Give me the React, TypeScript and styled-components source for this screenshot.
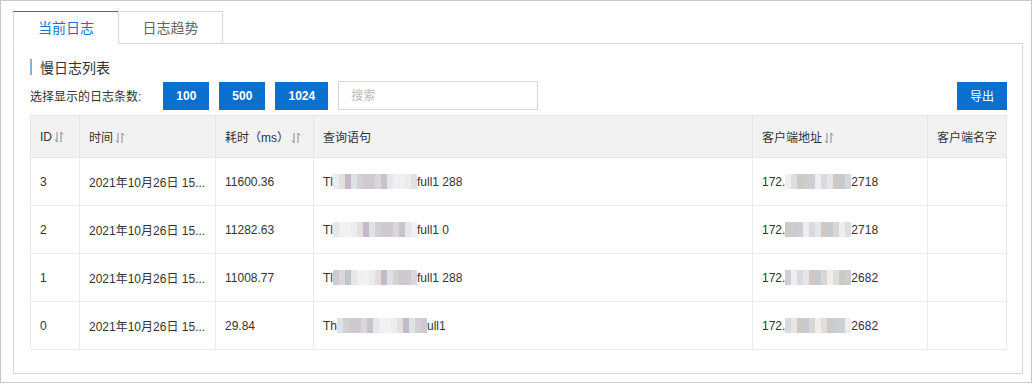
import * as React from "react"
import styled, { createGlobalStyle } from "styled-components"

const GlobalStyle = createGlobalStyle`
  html, body {
    margin: 0;
    padding: 0;
    background: #fff;
  }
  body {
    font-family: "Liberation Sans", "Noto Sans CJK SC", sans-serif;
    font-size: 12px;
    color: #333;
  }
`

const Frame = styled.div`
  box-sizing: border-box;
  width: 1032px;
  height: 383px;
  border: 1px solid #c8c8c8;
  padding: 10px 8px 8px 12px;
  display: flex;
  flex-direction: column;
`
const TabBar = styled.div`
  display: flex;
  height: 33px;
  position: relative;
  z-index: 1;
  margin-bottom: -1px;
`
const Tab = styled.div<{ $active?: boolean }>`
  box-sizing: border-box;
  width: ${p => (p.$active ? "106px" : "105px")};
  height: 33px;
  line-height: 32px;
  text-align: center;
  font-size: 14px;
  background: #fff;
  color: ${p => (p.$active ? "#1a72c6" : "#666")};
  border: 1px solid #d7d7d7;
  border-top-color: ${p => (p.$active ? "#1a72c6" : "#d7d7d7")};
  border-bottom-color: ${p => (p.$active ? "#fff" : "#d7d7d7")};
  margin-left: ${p => (p.$active ? "0" : "-1px")};
`
const Panel = styled.div`
  flex: 1;
  border: 1px solid #d7d7d7;
  padding: 14px 15px 0 16px;
`
const Title = styled.div`
  display: flex;
  align-items: center;
  height: 18px;
  font-size: 14px;
  color: #333;
  &::before {
    content: "";
    width: 2px;
    height: 16px;
    background: #82b2e0;
    margin-right: 8px;
  }
`
const Toolbar = styled.div`
  display: flex;
  align-items: center;
  margin-top: 5px;
  height: 29px;
`
const Label = styled.span`
  margin-right: 22px;
`
const BlueButton = styled.button<{ $w: number }>`
  box-sizing: border-box;
  width: ${p => p.$w}px;
  height: 28px;
  border: none;
  background: #0a70ce;
  color: #fff;
  font-family: inherit;
  font-size: 12px;
  font-weight: bold;
  margin-right: 10px;
  padding: 0;
`
const Search = styled.input`
  box-sizing: border-box;
  width: 200px;
  height: 29px;
  border: 1px solid #d6d6d6;
  padding: 0 12px;
  font-family: inherit;
  font-size: 12px;
  outline: none;
  &::placeholder {
    color: #bbb;
  }
`
const Spacer = styled.div`
  flex: 1;
`
const ExportButton = styled(BlueButton)`
  margin-right: 0;
  font-weight: normal;
`
const Table = styled.table`
  margin-top: 5px;
  width: 976px;
  table-layout: fixed;
  border-collapse: collapse;
`
const Th = styled.th`
  height: 41px;
  background: #f2f2f2;
  border: 1px solid #e6e6e6;
  text-align: left;
  font-weight: normal;
  padding: 0 8px 0 9px;
  white-space: nowrap;
`
const Td = styled.td`
  height: 47px;
  border: 1px solid #ebebeb;
  padding: 0 6px 0 9px;
  white-space: nowrap;
`
const SortIcon = styled.svg`
  margin-left: 2px;
  vertical-align: -2px;
`
const Mosaic = styled.span`
  display: inline-flex;
  vertical-align: -3px;
  height: 15px;
`
const Cell = styled.span<{ $c: string }>`
  width: 6px;
  height: 15px;
  background: ${p => p.$c};
`

const Sort = () => (
  <SortIcon width="10" height="12" viewBox="0 0 10 12" fill="none" stroke="#8a8a8a" strokeWidth="1">
    <path d="M3 1v10L1 8.5M7 11V1l2 2.5" />
  </SortIcon>
)

const shades = ["#ecebee", "#dcd6dc", "#c4b8cb", "#e8e6ea", "#d2d2d5", "#f1f1f1", "#d0c9d0", "#e2e0dc", "#c2c6ca", "#dfe2e4", "#f0f0f0", "#cfc8cd"]
const ipShades = ["#f0efee", "#cfc9c0", "#eeeeee", "#cdc9c5", "#d8d5d5", "#e6e6e8", "#cdcfd3", "#dedede", "#c6cacf", "#dadade", "#cccdd1"]

const Blur: React.FC<{ n: number; seed: number; pal: string[] }> = ({ n, seed, pal }) => (
  <Mosaic>
    {Array.from({ length: n }).map((_, i) => (
      <Cell key={i} $c={pal[(i * 7 + seed * 3) % pal.length]} />
    ))}
  </Mosaic>
)

const rows = [
  { id: "3", ms: "11600.36", pre: "Tl", tail: "full1 288", ip: "2718" },
  { id: "2", ms: "11282.63", pre: "Tl", tail: "full1 0", ip: "2718" },
  { id: "1", ms: "11008.77", pre: "Tl", tail: "full1 288", ip: "2682" },
  { id: "0", ms: "29.84", pre: "Th", tail: "ull1", ip: "2682" },
]

export default function App() {
  return (
    <>
      <GlobalStyle />
      <Frame>
        <TabBar>
          <Tab $active>当前日志</Tab>
          <Tab>日志趋势</Tab>
        </TabBar>
        <Panel>
          <Title>慢日志列表</Title>
          <Toolbar>
            <Label>选择显示的日志条数:</Label>
            <BlueButton $w={46}>100</BlueButton>
            <BlueButton $w={46}>500</BlueButton>
            <BlueButton $w={53}>1024</BlueButton>
            <Search placeholder="搜索" />
            <Spacer />
            <ExportButton $w={50}>导出</ExportButton>
          </Toolbar>
          <Table>
            <colgroup>
              <col style={{ width: 49 }} />
              <col style={{ width: 136 }} />
              <col style={{ width: 98 }} />
              <col style={{ width: 439 }} />
              <col style={{ width: 175 }} />
              <col style={{ width: 79 }} />
            </colgroup>
            <thead>
              <tr>
                <Th>ID<Sort /></Th>
                <Th>时间<Sort /></Th>
                <Th>耗时（ms）<Sort /></Th>
                <Th>查询语句</Th>
                <Th>客户端地址<Sort /></Th>
                <Th>客户端名字</Th>
              </tr>
            </thead>
            <tbody>
              {rows.map((r, i) => (
                <tr key={r.id}>
                  <Td>{r.id}</Td>
                  <Td>2021年10月26日 15...</Td>
                  <Td>{r.ms}</Td>
                  <Td>
                    {r.pre}
                    <Blur n={r.pre === "Th" ? 15 : 14} seed={i} pal={shades} />
                    {r.tail}
                  </Td>
                  <Td>
                    172.
                    <Blur n={11} seed={i} pal={ipShades} />
                    {r.ip}
                  </Td>
                  <Td />
                </tr>
              ))}
            </tbody>
          </Table>
        </Panel>
      </Frame>
    </>
  )
}
